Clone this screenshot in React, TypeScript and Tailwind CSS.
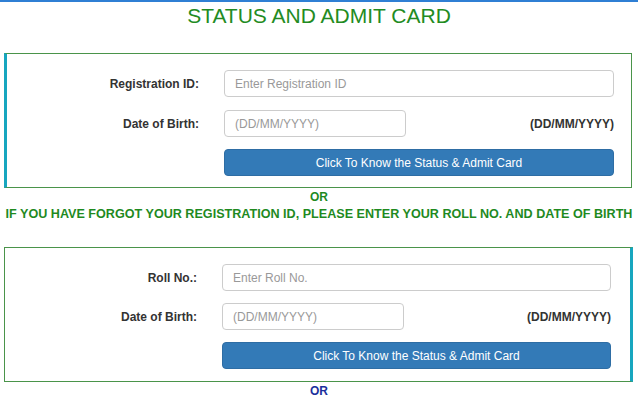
import React from "react";

const font = { fontFamily: '"Liberation Sans", Arial, sans-serif' };

function Row({ label, placeholder }: { label: string; placeholder: string }) {
  return (
    <div className="flex items-center h-[27px]">
      <div className="w-[192px] shrink-0 text-right text-[12px] font-bold text-[#333]">{label}</div>
      <div className="ml-[25px] flex-1">
        <div className="h-[27px] w-full rounded-[4px] border border-[#ccc] bg-white px-[10px] flex items-center text-[12px] text-[#999]">
          {placeholder}
        </div>
      </div>
    </div>
  );
}

function DobRow() {
  return (
    <div className="flex items-center h-[27px]">
      <div className="w-[192px] shrink-0 text-right text-[12px] font-bold text-[#333]">Date of Birth:</div>
      <div className="ml-[25px] flex-1 flex items-center">
        <div className="h-[27px] w-[182px] rounded-[4px] border border-[#ccc] bg-white px-[10px] flex items-center text-[12px] text-[#999]">
          (DD/MM/YYYY)
        </div>
        <div className="flex-1 text-right text-[12px] font-bold text-[#333]">(DD/MM/YYYY)</div>
      </div>
    </div>
  );
}

function Button() {
  return (
    <div className="flex items-center">
      <div className="w-[192px] shrink-0" />
      <div className="ml-[25px] flex-1 h-[27px] rounded-[4px] bg-[#337ab7] border border-[#2e6da4] text-white text-[12px] flex items-center justify-center">
        Click To Know the Status &amp; Admit Card
      </div>
    </div>
  );
}

export default function App() {
  return (
    <div className="w-[638px] h-[400px] bg-white overflow-hidden" style={font}>
      <div className="h-[2px] bg-[#2f7fd4]" />
      <div className="text-center text-[21px] leading-[28px] text-[#228b22]">STATUS AND ADMIT CARD</div>
      <div className="h-[23px]" />
      <div className="ml-[4px] w-[628px] h-[135px] border-solid border-t border-r border-b border-t-[#4a944a] border-r-[#4a944a] border-b-[#4a944a] border-l-[3px] border-l-[#17a6bf] pt-[16px] pr-[17px] flex flex-col gap-[12px]">
        <Row label="Registration ID:" placeholder="Enter Registration ID" />
        <div className="mt-[1px]">
          <DobRow />
        </div>
        <Button />
      </div>
      <div className="text-center text-[12px] font-bold text-[#1f8a1f] leading-[16px] mt-[1px]">OR</div>
      <div className="text-center text-[12.6px] font-bold text-[#1f8a1f] leading-[18px] whitespace-nowrap">
        IF YOU HAVE FORGOT YOUR REGISTRATION ID, PLEASE ENTER YOUR ROLL NO. AND DATE OF BIRTH
      </div>
      <div className="h-[24px]" />
      <div className="ml-[4px] w-[629px] h-[135px] border-solid border-t border-l border-b border-t-[#4a944a] border-l-[#4a944a] border-b-[#4a944a] border-r-[3px] border-r-[#17a6bf] pt-[16px] pr-[19px] flex flex-col gap-[12px]">
        <Row label="Roll No.:" placeholder="Enter Roll No." />
        <DobRow />
        <Button />
      </div>
      <div className="text-center text-[12px] font-bold text-[#1c2f9c] leading-[16px] mt-[1px]">OR</div>
    </div>
  );
}
